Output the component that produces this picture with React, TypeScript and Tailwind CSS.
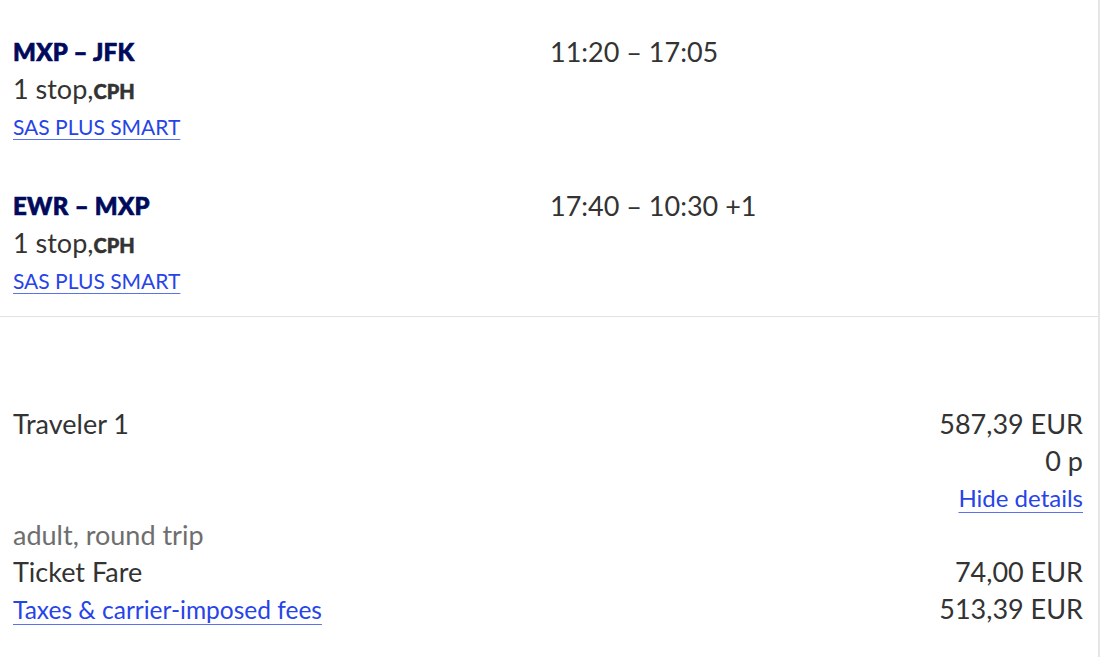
import React from "react";

function Flight({ route, time, first }: { route: string; time: string; first?: boolean }) {
  return (
    <div className={`flex ${first ? "" : "mt-[43px]"}`}>
      <div className="w-[537px] flex flex-col">
        <div className="h-[37px] leading-[37px] text-[24px] font-black text-[#000a5c] tracking-[0.3px] [-webkit-text-stroke:0.7px_#000a5c]">
          {route}
        </div>
        <div className="h-[37px] leading-[37px] text-[27px] text-[#333333]">
          1 stop,<span className="text-[20px] font-black text-[#333333] [-webkit-text-stroke:0.5px_#333333]">CPH</span>
        </div>
        <div className="h-[37px] leading-[40px] text-[21px]">
          <a href="#" className="text-[#2744e8] underline decoration-[1px] underline-offset-[4px] decoration-[#5a72ee]">
            SAS PLUS SMART
          </a>
        </div>
      </div>
      <div className="h-[37px] leading-[37px] text-[27px] text-[#333333]">{time}</div>
    </div>
  );
}

export default function App() {
  return (
    <div className="w-[1100px] h-[657px] bg-white border-r-2 border-[#e6e6e6] overflow-hidden font-['Lato',sans-serif]">
      <div className="pt-[33px] pb-[18px] pl-[13px] pr-[15px] border-b border-[#e2e2e2]">
        <Flight route="MXP – JFK" time="11:20 – 17:05" first />
        <Flight route="EWR – MXP" time="17:40 – 10:30 +1" />
      </div>
      <div className="pt-[88px] pl-[13px] pr-[15px] text-[27px] leading-[37px] text-[#333333]">
        <div className="flex justify-between">
          <div className="h-[37px]">Traveler 1</div>
          <div className="flex flex-col items-end">
            <div className="h-[37px]">587,39 EUR</div>
            <div className="h-[37px]">0 p</div>
            <div className="h-[37px] text-[24px]">
              <a href="#" className="text-[#2744e8] underline decoration-[1px] underline-offset-[5px] decoration-[#5a72ee]">
                Hide details
              </a>
            </div>
          </div>
        </div>
        <div className="h-[37px] text-[#6e6e6e]">adult, round trip</div>
        <div className="flex justify-between">
          <div className="h-[37px]">Ticket Fare</div>
          <div className="h-[37px]">74,00 EUR</div>
        </div>
        <div className="flex justify-between">
          <div className="h-[37px] text-[24.5px] leading-[40px]">
            <a href="#" className="text-[#2744e8] underline decoration-[1px] underline-offset-[5px] decoration-[#5a72ee]">
              Taxes &amp; carrier-imposed fees
            </a>
          </div>
          <div className="h-[37px]">513,39 EUR</div>
        </div>
      </div>
    </div>
  );
}
